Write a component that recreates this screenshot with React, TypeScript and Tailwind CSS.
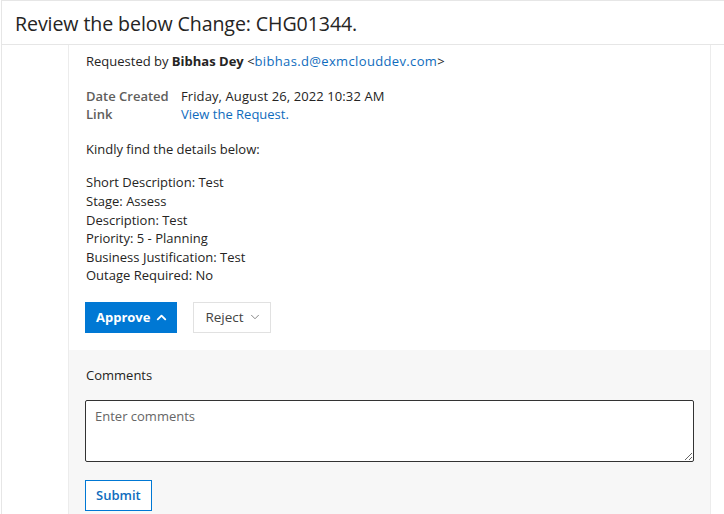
import { ChevronDown, ChevronUp } from 'lucide-react';

const details = [
  'Short Description: Test',
  'Stage: Assess',
  'Description: Test',
  'Priority: 5 - Planning',
  'Business Justification: Test',
  'Outage Required: No',
];

export default function App() {
  return (
    <div
      className="w-[724px] h-[514px] overflow-hidden bg-white text-[#252423]"
      style={{ fontFamily: '"Open Sans", "Noto Sans", sans-serif' }}
    >
      <div className="h-full ml-px border-l border-t border-[#e6e6e6] flex flex-col">
        {/* Header */}
        <div className="h-[44px] shrink-0 border-b border-[#e6e6e6] flex items-center pl-[13px] pt-[3px]">
          <h1 className="text-[19.6px] text-[#252423] tracking-[-0.1px]">Review the below Change: CHG01344.</h1>
        </div>

        {/* Body */}
        <div className="flex-1 pl-[66px] pr-[13px]">
          <div className="h-full border-l border-r border-[#ececec] flex flex-col">
            <div className="pl-[17px] pt-[7px] pb-[17px] text-[13px] leading-[18.6px]">
              <p>
                Requested by <span className="font-bold">Bibhas Dey</span>{' '}
                &lt;<span className="text-[#0f6cbd] tracking-[0.35px]">bibhas.d@exmclouddev.com</span>&gt;
              </p>

              <div className="mt-[16px] grid grid-cols-[95px_1fr]">
                <span className="text-[#605e5c] font-semibold">Date Created</span>
                <span className="tracking-[0.1px]">Friday, August 26, 2022 10:32 AM</span>
                <span className="text-[#605e5c] font-semibold">Link</span>
                <span className="text-[#0f6cbd]">View the Request.</span>
              </div>

              <p className="mt-[16px]">Kindly find the details below:</p>

              <div className="mt-[15px]">
                {details.map((d) => (
                  <p key={d}>{d}</p>
                ))}
              </div>

              <div className="mt-[17px] -ml-px flex gap-[16px]">
                <button className="h-[31px] pl-[11px] pr-[8px] bg-[#0078d4] text-white text-[13px] font-bold flex items-center gap-[4px]">
                  Approve
                  <ChevronUp size={15} strokeWidth={3} />
                </button>
                <button className="h-[31px] pl-[11px] pr-[8px] border border-[#e1e1e1] text-[#444] text-[13.5px] flex items-center gap-[4px]">
                  Reject
                  <ChevronDown size={14} strokeWidth={1.5} className="text-[#777]" />
                </button>
              </div>
            </div>

            {/* Comments */}
            <div className="flex-1 bg-[#f7f7f7] pl-[16px] pr-[16px] pt-[16px]">
              <p className="pl-px text-[13px] leading-[18px]">Comments</p>
              <textarea
                className="mt-[16px] block w-full h-[62px] bg-white border border-[#333] rounded-[2px] px-[9px] py-[6px] text-[13px] placeholder:text-[#666] outline-none"
                placeholder="Enter comments"
              />
              <button className="mt-[18px] h-[31px] px-[10px] border border-[#0078d4] bg-white text-[#0f6cbd] text-[13px] font-semibold">
                Submit
              </button>
            </div>
          </div>
        </div>
      </div>
    </div>
  );
}
